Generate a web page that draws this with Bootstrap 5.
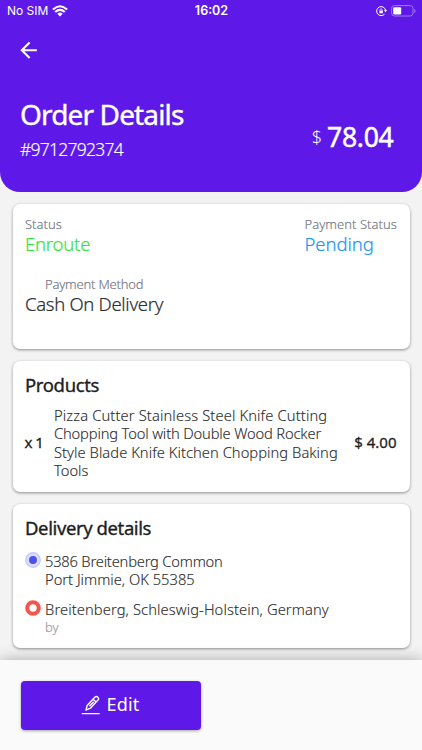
<!DOCTYPE html>
<html lang="en">
<head>
<meta charset="utf-8">
<meta name="viewport" content="width=device-width, initial-scale=1">
<title>Order Details</title>
<link href="https://cdn.jsdelivr.net/npm/bootstrap@5.3.0/dist/css/bootstrap.min.css" rel="stylesheet">
<style>
body{font-family:"Noto Sans","Open Sans",sans-serif;background:#f3f3f3;height:750px;overflow:hidden;font-weight:300;color:#333}
.hero{height:192px;background:#5e19e9;border-radius:0 0 20px 20px;color:#fff}
.statusbar{height:22px;font-family:Inter,sans-serif;font-size:12px;font-weight:400;padding:0 6px 0 7px}
.statusbar .clock{font-weight:600;font-size:12.5px}
.side{width:80px}
.back{margin:19px 0 0 20px;height:18px}
.title-row{margin:39px 28px 0 20px}
.title-text{font-size:28px;line-height:32px;font-weight:400;letter-spacing:-.86px;-webkit-text-stroke:.4px #fff}
.number{font-size:17.5px;line-height:24px;margin-top:7px;letter-spacing:-.75px;-webkit-text-stroke:.15px #fff}
.total{font-size:26.5px;line-height:32px;margin-top:15px}
.total-cur{font-size:18px}
.total-sum{font-weight:400;letter-spacing:-.25px;margin:0 .5px 0 5px;-webkit-text-stroke:.5px #fff}
.page-main{padding-top:12px}
.panel{margin:0 12.5px 12px;padding:0 12.5px;background:#fff;border:0;border-radius:7px;box-shadow:0 1px 3px rgba(0,0,0,.42)}
.panel-status{height:144.5px;padding-top:11px}
.panel-products{height:131.5px;padding-top:12px}
.panel-delivery{height:144px;padding-top:12px}
.cap-text{font-size:13px;line-height:18px;font-weight:300;color:#747683;-webkit-text-stroke:.15px}
.value{font-size:18.5px;line-height:22px;-webkit-text-stroke:.2px}
.c-enroute{color:#35e43c;letter-spacing:-.2px}
.c-pending{color:#2196f3;letter-spacing:-.05px}
.c-cash{color:#2e2e2e;letter-spacing:-.3px}
.w-pay{letter-spacing:.05px}
.method{margin-top:20px}
.method .cap-text{padding-left:20px;letter-spacing:-.2px}
.heading{font-size:18.5px;line-height:24px;font-weight:400;color:#1e1e1e;-webkit-text-stroke:.35px}
.h-prod{letter-spacing:-.35px}
.h-del{letter-spacing:-.4px}
.copy{font-size:14.7px;line-height:18.35px;color:#2c2c2c;-webkit-text-stroke:.12px}
.qty{font-size:15px;font-weight:400;color:#1e1e1e;-webkit-text-stroke:.3px}
.qty-count{width:29.5px;letter-spacing:-.5px;margin-left:-.5px}
.product-row{margin-top:9.4px}
.qty-price{margin-right:.5px}
.stop-pin{width:20px}
.stop-pin svg{display:block;margin-left:-.3px}
.stop-a{margin-top:8px}
.stop-b{margin-top:8px}
.stop-a .copy{padding-top:4px}
.stop-b .copy{padding-top:3.6px}
.stop-a svg{margin-top:4px}
.stop-b svg{margin-top:3.6px}
.stop-by{color:#999ba5;line-height:16px}
.footer-bar{height:90px;background:#fafafa;box-shadow:0 0 14px rgba(0,0,0,.3);padding:20.5px}
.btn-edit{width:180px;height:49px;background:#5e19e9;border:0;border-radius:4px;box-shadow:0 1px 3px rgba(0,0,0,.35);color:#fff;font-size:18px;padding:0 0 1px}
.btn-edit:hover{background:#5e19e9;color:#fff}
.btn-edit span{letter-spacing:.2px;margin-left:1px}
.p1{letter-spacing:.13px}.p2{letter-spacing:-.15px}.p3{letter-spacing:.05px}.p4{letter-spacing:-.2px}.p5{letter-spacing:.1px}
</style>
</head>
<body class="d-flex flex-column">
<header class="hero flex-shrink-0">
  <div class="statusbar d-flex justify-content-between align-items-center">
    <div class="side d-flex align-items-center gap-1"><span class="text-nowrap">No SIM</span>
      <svg width="16" height="12" viewBox="0 0 16 12" fill="none" stroke="#fff" stroke-width="2.1"><path d="M.9 4.5Q8-2 15.1 4.5M3.2 7Q8 2.7 12.8 7"/><path d="M5.3 8.7Q8 6.4 10.7 8.7L8 11.5Z" fill="#fff" stroke="none"/></svg></div>
    <div class="clock">16:02</div>
    <div class="side d-flex align-items-center justify-content-end">
      <svg width="11" height="12" viewBox="0 0 11 12" fill="none" stroke="#fff"><path d="M8.6 9A4.5 4.5 0 1 1 9.5 5" stroke-width="1"/><path d="M8 5h3L9.6 7.2Z" fill="#fff" stroke="none"/><path d="M3.4 5.6h3.4v2.7H3.4z" fill="#fff" stroke="none"/><path d="M4.1 5.8V4.4q1-1.4 2 0v1.4" stroke-width=".7"/></svg>
      <svg class="ms-1" width="25" height="12" viewBox="0 0 25 12"><rect x=".6" y=".6" width="21.4" height="10.4" rx="2.8" fill="none" stroke="#a17bf3"/><rect x="2.2" y="2.2" width="8" height="7.2" rx="1.2" fill="#fff"/><path d="M23.3 4v4q1.3-.5 1.3-2t-1.3-2" fill="#a17bf3"/></svg>
    </div>
  </div>
  <div class="back d-flex"><svg width="18" height="18" viewBox="0 0 18 18" fill="none" stroke="#fff" stroke-width="2.1"><path d="M16.9 9.2H2M9.6 1.4 1.8 9.2l7.8 7.8"/></svg></div>
  <div class="title-row d-flex justify-content-between">
    <div><div class="title-text">Order Details</div><div class="number">#9712792374</div></div>
    <div class="total d-flex align-items-center"><span class="total-cur">$</span><span class="total-sum">78.04</span></div>
  </div>
</header>
<main class="page-main flex-grow-1 overflow-hidden">
  <section class="card panel panel-status">
    <div class="d-flex justify-content-between">
      <div><div class="cap-text">Status</div><div class="value c-enroute">Enroute</div></div>
      <div><div class="cap-text w-pay">Payment Status</div><div class="value c-pending">Pending</div></div>
    </div>
    <div class="method"><div class="cap-text">Payment Method</div><div class="value c-cash">Cash On Delivery</div></div>
  </section>
  <section class="card panel panel-products">
    <div class="heading h-prod">Products</div>
    <div class="product-row d-flex align-items-center">
      <div class="qty qty-count">x 1</div>
      <div class="copy text-nowrap flex-grow-1">
        <div class="p1">Pizza Cutter Stainless Steel Knife Cutting</div>
        <div class="p2">Chopping Tool with Double Wood Rocker</div>
        <div class="p3">Style Blade Knife Kitchen Chopping Baking</div>
        <div>Tools</div>
      </div>
      <div class="qty qty-price">$ 4.00</div>
    </div>
  </section>
  <section class="card panel panel-delivery">
    <div class="heading h-del">Delivery details</div>
    <div class="stop-a d-flex">
      <div class="stop-pin"><svg width="16" height="16" viewBox="0 0 15 15"><circle cx="7.5" cy="7.5" r="7.4" fill="#c3c6fa"/><circle cx="7.5" cy="7.5" r="6.2" fill="#dcdefd"/><circle cx="7.5" cy="7.5" r="3.7" fill="#4d50f0"/></svg></div>
      <div class="copy"><div class="p4">5386 Breitenberg Common</div><div>Port Jimmie, OK 55385</div></div>
    </div>
    <div class="stop-b d-flex">
      <div class="stop-pin"><svg width="16" height="16" viewBox="0 0 15 15"><circle cx="7.5" cy="7.5" r="5.4" fill="#fff" stroke="#f4574a" stroke-width="3.8"/></svg></div>
      <div class="copy text-nowrap"><div class="p5">Breitenberg, Schleswig-Holstein, Germany</div><div class="cap-text stop-by">by</div></div>
    </div>
  </section>
</main>
<footer class="footer-bar flex-shrink-0 position-relative">
  <button class="btn btn-edit d-flex align-items-center justify-content-center gap-1"><svg width="20" height="20" viewBox="0 0 20 20" fill="none" stroke="#fff" stroke-width="1.4" stroke-linejoin="round" stroke-linecap="round"><path d="M1.2 18.6h17"/><path d="M5 15.2 6.2 10.4 13.8 2.2q1.5-1.4 3 0t.2 2.9L9.4 13.2ZM12.2 4.2l2.9 2.8M8.9 10.8l3.4-3.6"/></svg><span>Edit</span></button>
</footer>
<script src="https://cdn.jsdelivr.net/npm/bootstrap@5.3.0/dist/js/bootstrap.bundle.min.js"></script>
</body>
</html>
